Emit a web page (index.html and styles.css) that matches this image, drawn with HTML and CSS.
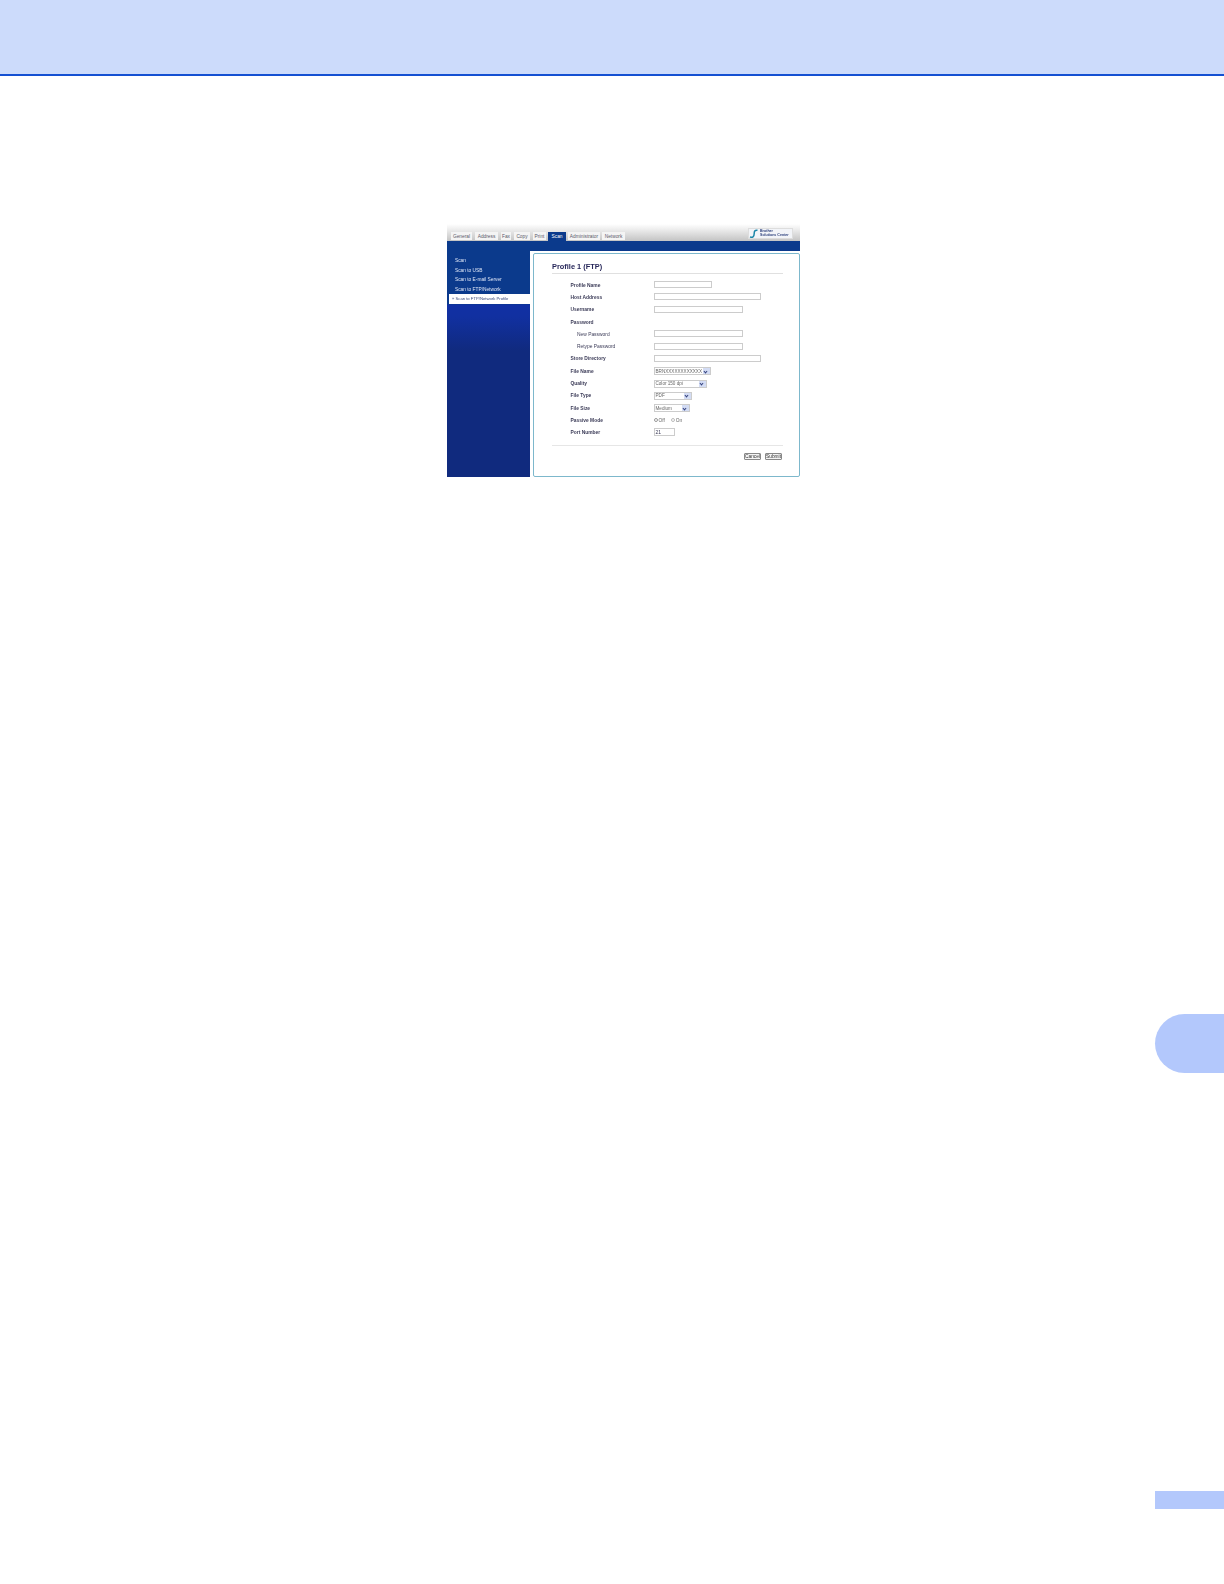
FILE: index.html
```html
<!doctype html>
<html lang="en">
    <head>
        <meta charset="UTF-8" />
        <title>Scan to FTP/Network Profile</title>
        <link rel="stylesheet" href="styles.css">
    </head>
    <body>
        <div class="page-header"></div>

        <div class="shot">
            <div class="top-bar">
                <div class="tabs">
                    <div class="tab tab-general">General</div>
                    <div class="tab tab-address">Address</div>
                    <div class="tab tab-fax">Fax</div>
                    <div class="tab tab-copy">Copy</div>
                    <div class="tab tab-print">Print</div>
                    <div class="tab tab-scan selected">Scan</div>
                    <div class="tab tab-admin">Administrator</div>
                    <div class="tab tab-network">Network</div>
                </div>
                <div class="logo">
                    <svg class="logo-icon" viewBox="0 0 10 10">
                        <path d="M8.5 1.2 C5.6 .8 5.2 2.6 5.2 4.6 C5.2 7.8 3.4 9 1 7.8" />
                    </svg>
                    <div class="logo-text">Brother<br>Solutions Center</div>
                </div>
            </div>
            <div class="band"></div>

            <div class="shot-body">
                <div class="sidebar">
                    <div class="side-item side-first">Scan</div>
                    <div class="side-item">Scan to USB</div>
                    <div class="side-item">Scan to E-mail Server</div>
                    <div class="side-item">Scan to FTP/Network</div>
                    <div class="side-item selected">&raquo; Scan to FTP/Network Profile</div>
                </div>

                <div class="panel">
                    <div class="panel-title">Profile 1 (FTP)</div>
                    <div class="form">
                        <div class="row"><div class="label">Profile Name</div><div class="field w-profile"></div></div>
                        <div class="row"><div class="label">Host Address</div><div class="field w-long"></div></div>
                        <div class="row"><div class="label">Username</div><div class="field w-mid"></div></div>
                        <div class="row"><div class="label">Password</div></div>
                        <div class="row"><div class="label sub">New Password</div><div class="field w-mid"></div></div>
                        <div class="row"><div class="label sub">Retype Password</div><div class="field w-mid"></div></div>
                        <div class="row"><div class="label">Store Directory</div><div class="field w-long"></div></div>
                        <div class="row"><div class="label">File Name</div><div class="select w-name"><span>BRNXXXXXXXXXXXX</span><i class="arrow"></i></div></div>
                        <div class="row"><div class="label">Quality</div><div class="select w-quality"><span>Color 150 dpi</span><i class="arrow"></i></div></div>
                        <div class="row"><div class="label">File Type</div><div class="select w-type"><span>PDF</span><i class="arrow"></i></div></div>
                        <div class="row"><div class="label">File Size</div><div class="select w-size"><span>Medium</span><i class="arrow"></i></div></div>
                        <div class="row">
                            <div class="label">Passive Mode</div>
                            <div class="radios">
                                <i class="radio"></i><span>Off</span>
                                <i class="radio radio-on"></i><span>On</span>
                            </div>
                        </div>
                        <div class="row"><div class="label">Port Number</div><div class="field w-port">21</div></div>
                    </div>
                    <div class="actions">
                        <div class="btn btn-cancel">Cancel</div>
                        <div class="btn btn-submit">Submit</div>
                    </div>
                </div>
            </div>
        </div>

        <div class="chapter-tab"></div>
        <div class="page-num"></div>
    </body>
</html>
```

FILE: styles.css
```css
:root {
    --tab-color: #b3c8fc;
    --header-color: #ccdbfb;
    --header-line: #1450d2;
    --navy: #102a7e;
    --band: #0b3a8c;
    --panel-border: #7db8cc;
    --field-border: #cccccc;
    --text-color: #3c3c58;
}

body {
    margin: 0;
    background-color: #ffffff;
    font-family: "Liberation Sans", Arial, sans-serif;
}

.page-header {
    height: 74px;
    background-color: var(--header-color);
    border-bottom: 2px solid var(--header-line);
}

/* Embedded screenshot of the web interface */
.shot {
    width: 353px;
    height: 253px;
    margin: 148px 0 0 447px;
    filter: blur(0.45px);
}

.top-bar {
    height: 17px;
    display: flex;
    justify-content: space-between;
    align-items: flex-end;
    background: linear-gradient(#ffffff, #f1f1f1 25%, #c4c4c4);
}

.tabs {
    display: flex;
    padding-left: 4px;
}

.tab {
    height: 8px;
    line-height: 9px;
    font-size: 4.8px;
    text-align: center;
    color: #5a5a6a;
    background-color: #f4f4f4;
}

.tab-general { width: 21px; margin-right: 3px; }
.tab-address { width: 23px; margin-right: 3px; }
.tab-fax { width: 10px; margin-right: 3px; }
.tab-copy { width: 16px; margin-right: 3px; }
.tab-print { width: 13px; margin-right: 2px; }
.tab-scan { width: 18px; margin-right: 2px; }
.tab-admin { width: 32px; margin-right: 2px; }
.tab-network { width: 23px; }

.tab.selected {
    height: 9px;
    line-height: 10px;
    background-color: var(--band);
    color: #ffffff;
}

.logo {
    width: 45px;
    height: 11px;
    margin: 0 7px 2px 0;
    display: flex;
    align-items: center;
    background-color: #f2f4f8;
    border: 1px solid #dddddd;
    box-sizing: border-box;
}

.logo-icon {
    width: 10px;
    height: 10px;
    fill: none;
    stroke: #1b86a8;
    stroke-width: 1.5;
}

.logo-text {
    margin-left: 1px;
    font-size: 3.6px;
    line-height: 3.8px;
    font-weight: bold;
    color: #2b3f7c;
    white-space: nowrap;
}

.band {
    height: 10px;
    background-color: var(--band);
}

.shot-body {
    height: 226px;
    display: flex;
    gap: 3px;
}

.sidebar {
    width: 83px;
    background: linear-gradient(var(--band), var(--band) 53px, #1130a4 54px, #1130a0 66px, var(--navy) 100px);
}

.side-item {
    height: 9.6px;
    line-height: 9.6px;
    padding-left: 8px;
    font-size: 4.8px;
    color: #dfe6f6;
    white-space: nowrap;
}

.side-first {
    margin-top: 5px;
}

.side-item.selected {
    height: 10px;
    line-height: 10px;
    margin-left: 2px;
    padding-left: 3px;
    font-size: 4.2px;
    background-color: #ffffff;
    color: #3a4a7c;
}

.panel {
    width: 267px;
    height: 224px;
    margin-top: 2px;
    padding: 0 16px 0 18px;
    box-sizing: border-box;
    background-color: #ffffff;
    border: 1px solid var(--panel-border);
    border-radius: 2px;
}

.panel-title {
    height: 19px;
    line-height: 26px;
    font-size: 7.4px;
    font-weight: bold;
    color: #27275a;
    border-bottom: 1px solid #e0e0e0;
}

.form {
    margin-top: 5px;
}

.row {
    height: 12.3px;
    display: flex;
    align-items: center;
    color: var(--text-color);
    font-size: 4.9px;
}

.label {
    width: 83px;
    margin-left: 18.5px;
    font-weight: bold;
    white-space: nowrap;
}

.label.sub {
    font-weight: normal;
    padding-left: 6.5px;
    width: 76.5px;
}

.field {
    height: 7px;
    margin-bottom: 1px;
    box-sizing: border-box;
    line-height: 6px;
    padding-left: 1px;
    font-size: 5px;
    background-color: #ffffff;
    border: 1px solid var(--field-border);
}

.w-profile { width: 58px; }
.w-long { width: 107px; }
.w-mid { width: 89px; }
.w-port { width: 21px; height: 8px; }

.select {
    height: 8px;
    box-sizing: border-box;
    display: flex;
    justify-content: space-between;
    align-items: center;
    padding-left: 1px;
    font-size: 4.6px;
    color: #666666;
    border: 1px solid var(--field-border);
    white-space: nowrap;
    overflow: hidden;
}

.w-name { width: 57px; }
.w-quality { width: 53px; }
.w-type { width: 38px; }
.w-size { width: 36px; }

.arrow {
    flex: none;
    width: 7px;
    height: 6px;
    background-color: #d3dcf4;
    position: relative;
}

.arrow::after {
    content: "";
    position: absolute;
    left: 1.5px;
    top: 1.5px;
    width: 2px;
    height: 2px;
    border-right: 1px solid #33407c;
    border-bottom: 1px solid #33407c;
    transform: rotate(45deg) scale(0.9);
}

.radios {
    display: flex;
    align-items: center;
    font-size: 4.8px;
    color: #666666;
}

.radio {
    width: 4px;
    height: 4px;
    margin-right: 1px;
    box-sizing: border-box;
    border: 1px solid #999999;
    border-radius: 50%;
}

.radio-on {
    margin-left: 6px;
    border-color: #bbbbbb;
}

.actions {
    margin-top: 6px;
    padding: 7px 1px 0 0;
    height: 8px;
    display: flex;
    justify-content: flex-end;
    gap: 4px;
    border-top: 1px solid #e6e6e6;
}

.btn {
    height: 7px;
    line-height: 6px;
    box-sizing: border-box;
    text-align: center;
    font-size: 4.8px;
    color: #333333;
    background-color: #f4f4f4;
    border: 1px solid #888888;
    border-radius: 1px;
}

.btn-cancel { width: 17px; }
.btn-submit { width: 17px; }

/* Chapter marker and page number block on the right edge */
.chapter-tab {
    height: 59px;
    margin: 537px 0 0 1155px;
    background-color: var(--tab-color);
    border-radius: 30px 0 0 30px;
}

.page-num {
    height: 18px;
    margin: 418px 0 0 1155px;
    background-color: var(--tab-color);
}
```
